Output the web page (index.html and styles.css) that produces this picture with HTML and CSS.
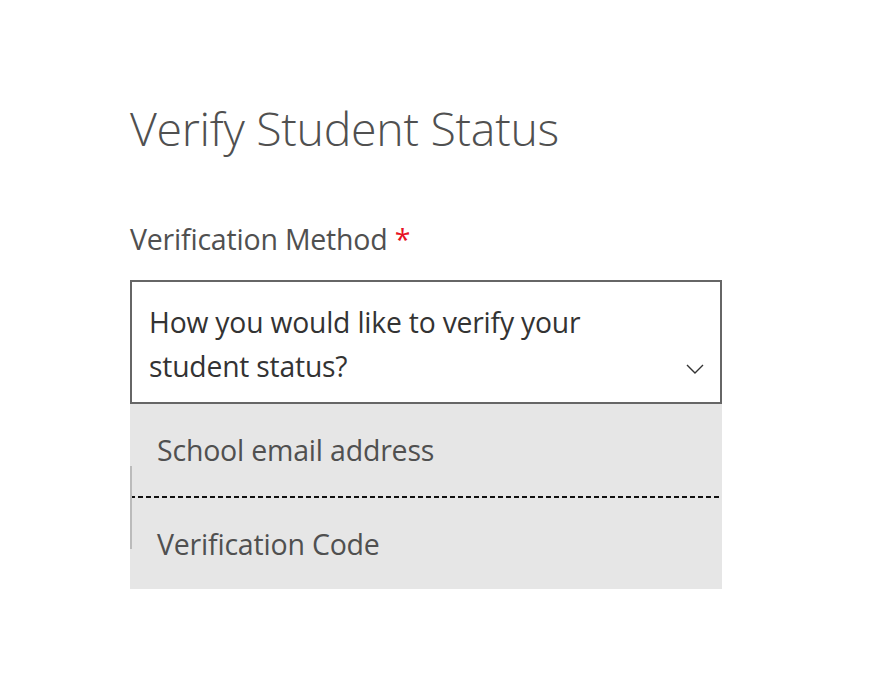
FILE: index.html
```html
<!DOCTYPE html>
<html>
<head>
<meta charset="utf-8">
<link rel="stylesheet" href="styles.css">
</head>
<body>
<main class="page">
  <h1 class="title">Verify Student Status</h1>
  <div class="field">
    <label class="label">Verification Method <span class="req">*</span></label>
    <div class="select">
      <span class="select-text">How you would like to verify your student status?</span>
      <svg class="chev" width="18" height="10" viewBox="0 0 18 10"><path d="M1 1 L9 9 L17 1" fill="none" stroke="#333" stroke-width="1.4"/></svg>
    </div>
    <div class="menu">
      <span class="ghost"></span>
      <div class="option">School email address</div>
      <div class="divider"></div>
      <div class="option last">Verification Code</div>
    </div>
  </div>
</main>
</body>
</html>
```
FILE: styles.css
```css
html, body { margin: 0; padding: 0; background: #fff; }
body { font-family: "Open Sans", "Noto Sans", sans-serif; color: #505050; }
.page { padding: 100px 0 0 130px; width: 592px; }
.title { margin: 0; font-weight: 300; font-size: 46.5px; line-height: 56px; color: #505050; letter-spacing: -0.3px; }
.field { margin-top: 65px; }
.label { display: block; font-size: 28.5px; line-height: 36px; font-weight: 400; color: #505050; margin-bottom: 23px; letter-spacing: -0.2px; }
.req { color: #e81123; }
.select { position: relative; border: 2px solid #666; box-sizing: border-box; height: 124px; padding: 18px 60px 0 17px; font-size: 28.3px; line-height: 44px; color: #333; letter-spacing: -0.2px; }
.chev { position: absolute; right: 16px; top: 82px; }
.menu { position: relative; background: #e6e6e6; }
.ghost { position: absolute; left: 0; top: 62px; width: 2px; height: 83px; background: #bbb; }
.option { height: 92px; box-sizing: border-box; padding-left: 27px; display: flex; align-items: center; font-size: 28.5px; color: #505050; letter-spacing: -0.2px; }
.option.last { height: 91px; }
.divider { height: 2px; background-image: linear-gradient(to right, #111 0 5px, transparent 5px 8px); background-size: 8px 2px; background-repeat: repeat-x; }
```
